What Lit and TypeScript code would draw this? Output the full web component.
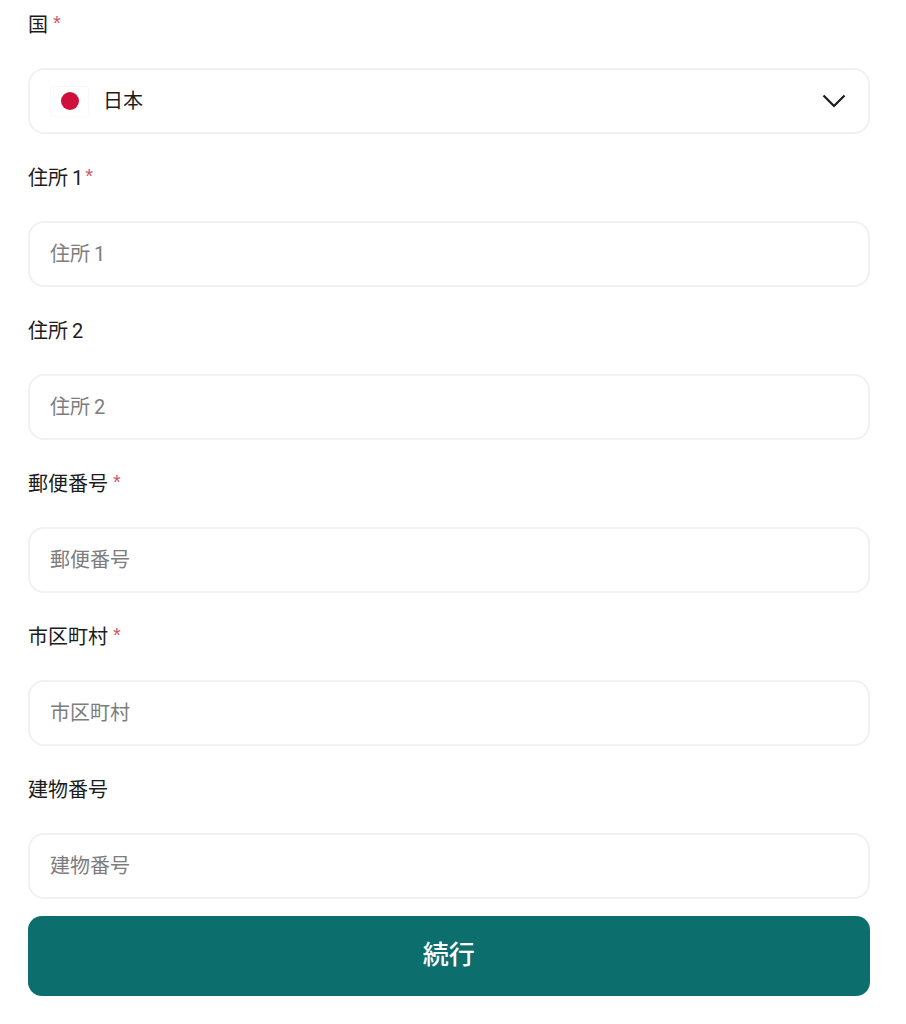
import { LitElement, html, css } from "lit";
import { customElement } from "lit/decorators.js";

const fields = [
  { label: "住所 1", req: true, tight: true },
  { label: "住所 2", req: false, tight: false },
  { label: "郵便番号", req: true, tight: false },
  { label: "市区町村", req: true, tight: false },
  { label: "建物番号", req: false, tight: false },
];

@customElement("app-root")
export class AppRoot extends LitElement {
  static styles = css`
    :host {
      display: block;
      width: 906px;
      height: 1024px;
      background: #fff;
      font-family: Roboto, "Noto Sans CJK JP", "Noto Sans", sans-serif;
      color: #1c1c1c;
      overflow: hidden;
    }
    .form {
      display: flex;
      flex-direction: column;
      padding: 0 36.5px 0 28px;
    }
    .field {
      display: flex;
      flex-direction: column;
      padding-top: 30px;
    }
    .field.first {
      padding-top: 11px;
    }
    .label {
      height: 57px;
      display: block;
      font-size: 20px;
      line-height: 28px;
      font-weight: 400;
      word-spacing: -1px;
    }
    .star {
      color: #cf5468;
      font-size: 20px;
      font-family: "Liberation Sans", sans-serif;
      margin-left: 5px;
      vertical-align: 2px;
      line-height: 1;
    }
    .star.tight {
      margin-left: 2px;
    }
    .box {
      height: 66px;
      box-sizing: border-box;
      border: 2px solid #f1f1f1;
      border-radius: 16px;
      background: #fff;
      display: flex;
      align-items: center;
      padding: 0 20px;
    }
    .ph {
      font-size: 20px;
      line-height: 28px;
      color: #7d7d7d;
      margin-top: -1px;
      word-spacing: -1px;
    }
    .flag {
      width: 39px;
      height: 31px;
      border: 1px solid #f8f8f8;
      border-radius: 3px;
      box-sizing: border-box;
      display: flex;
      align-items: center;
      justify-content: center;
      flex: none;
    }
    .dot {
      width: 18px;
      height: 18px;
      border-radius: 50%;
      background: #cf0f3c;
    }
    .value {
      margin-left: 14px;
      font-size: 20px;
      line-height: 28px;
      flex: 1;
    }
    .chevron {
      width: 24px;
      height: 14px;
      flex: none;
      margin-right: 2px;
    }
    .submit {
      margin-top: 17px;
      height: 80px;
      border: none;
      border-radius: 14px;
      background: #0d6e6e;
      color: #fff;
      font-family: inherit;
      font-size: 26px;
      font-weight: 500;
      line-height: 36px;
      padding: 0 0 2px;
    }
  `;

  render() {
    return html`
      <div class="form">
        <div class="field first">
          <span class="label">国<span class="star">*</span></span>
          <div class="box">
            <span class="flag"><span class="dot"></span></span>
            <span class="value">日本</span>
            <svg class="chevron" viewBox="0 0 24 14" fill="none" stroke="#1a1a1a" stroke-width="2.2">
              <path d="M1.5 1.5 L12 12 L22.5 1.5" />
            </svg>
          </div>
        </div>
        ${fields.map(
          (f) => html`
            <div class="field">
              <span class="label">${f.label}${f.req
                ? html`<span class="star ${f.tight ? "tight" : ""}">*</span>`
                : ""}</span>
              <div class="box"><span class="ph">${f.label}</span></div>
            </div>
          `
        )}
        <button class="submit">続行</button>
      </div>
    `;
  }
}
